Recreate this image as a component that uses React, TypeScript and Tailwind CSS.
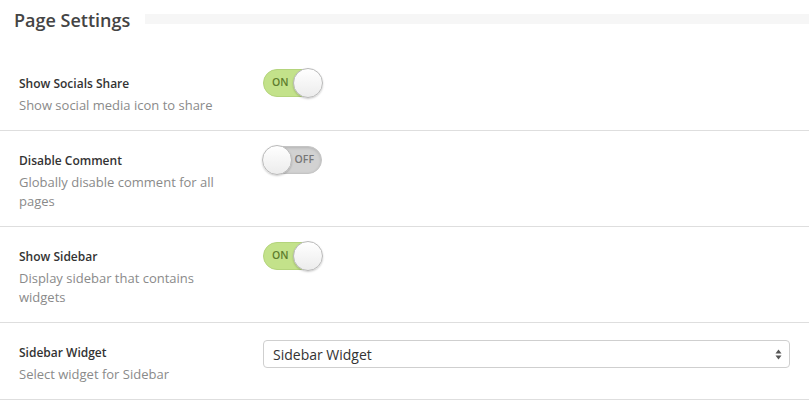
function Toggle({ on }: { on: boolean }) {
  return (
    <div
      className={`relative w-[59px] h-[28px] rounded-full border ${
        on
          ? 'bg-[#c3e28a] border-[#b4d47c]'
          : 'bg-[#d2d2d2] border-[#c4c4c4] shadow-[inset_0_1px_3px_rgba(0,0,0,0.15)]'
      }`}
    >
      <span
        className={`absolute top-1/2 -translate-y-1/2 text-[10.5px] font-semibold ${
          on ? 'left-[8px] text-[#5e7d2e]' : 'right-[7px] text-[#777]'
        }`}
      >
        {on ? 'ON' : 'OFF'}
      </span>
      <div
        className={`absolute top-[-2px] w-[30px] h-[30px] rounded-full border border-[#b9b9b9] bg-gradient-to-b from-white to-[#ececec] shadow-[0_1px_2px_rgba(0,0,0,0.2)] ${
          on ? 'right-[-2px]' : 'left-[-2px]'
        }`}
      ></div>
    </div>
  )
}

function Row({ label, desc, children }: { label: string; desc: string; children: React.ReactNode }) {
  return (
    <div className="grid grid-cols-[263px_1fr] border-b border-[#dedede] pt-[20px] pb-[15px]">
      <div className="pl-[19px] pr-[10px]">
        <div className="text-[12px] leading-[20px] font-semibold text-[#333]">{label}</div>
        <div className="mt-[2px] max-w-[205px] text-[13px] leading-[19px] text-[#8a8a8a]">{desc}</div>
      </div>
      <div className="pr-[19px]">{children}</div>
    </div>
  )
}

export default function App() {
  return (
    <div className="w-[809px] h-[400px] bg-white overflow-hidden font-['Open_Sans',sans-serif]">
      <div className="h-[54px] flex items-start pt-[6px]">
        <h2 className="pl-[14px] text-[18px] leading-[28px] font-semibold text-[#444]">Page Settings</h2>
        <div className="ml-[15px] mt-[8px] flex-1 h-[10px] bg-[#f6f6f6]"></div>
      </div>

      <Row label="Show Socials Share" desc="Show social media icon to share">
        <div className="-mt-[5px]">
          <Toggle on />
        </div>
      </Row>
      <Row label="Disable Comment" desc="Globally disable comment for all pages">
        <div className="-mt-[5px]">
          <Toggle on={false} />
        </div>
      </Row>
      <Row label="Show Sidebar" desc="Display sidebar that contains widgets">
        <div className="-mt-[5px]">
          <Toggle on />
        </div>
      </Row>
      <Row label="Sidebar Widget" desc="Select widget for Sidebar">
        <div className="-mt-[3px] h-[28px] w-[527px] flex items-center justify-between pl-[9px] pr-[7px] border border-[#cfcfcf] rounded-[4px] bg-white">
          <span className="text-[14px] text-[#333]">Sidebar Widget</span>
          <svg width="7" height="11" viewBox="0 0 7 11" className="text-[#555]">
            <path d="M3.5 0.5 L6.5 4.5 L0.5 4.5 Z" fill="currentColor" />
            <path d="M3.5 10.5 L6.5 6.5 L0.5 6.5 Z" fill="currentColor" />
          </svg>
        </div>
      </Row>
    </div>
  )
}
